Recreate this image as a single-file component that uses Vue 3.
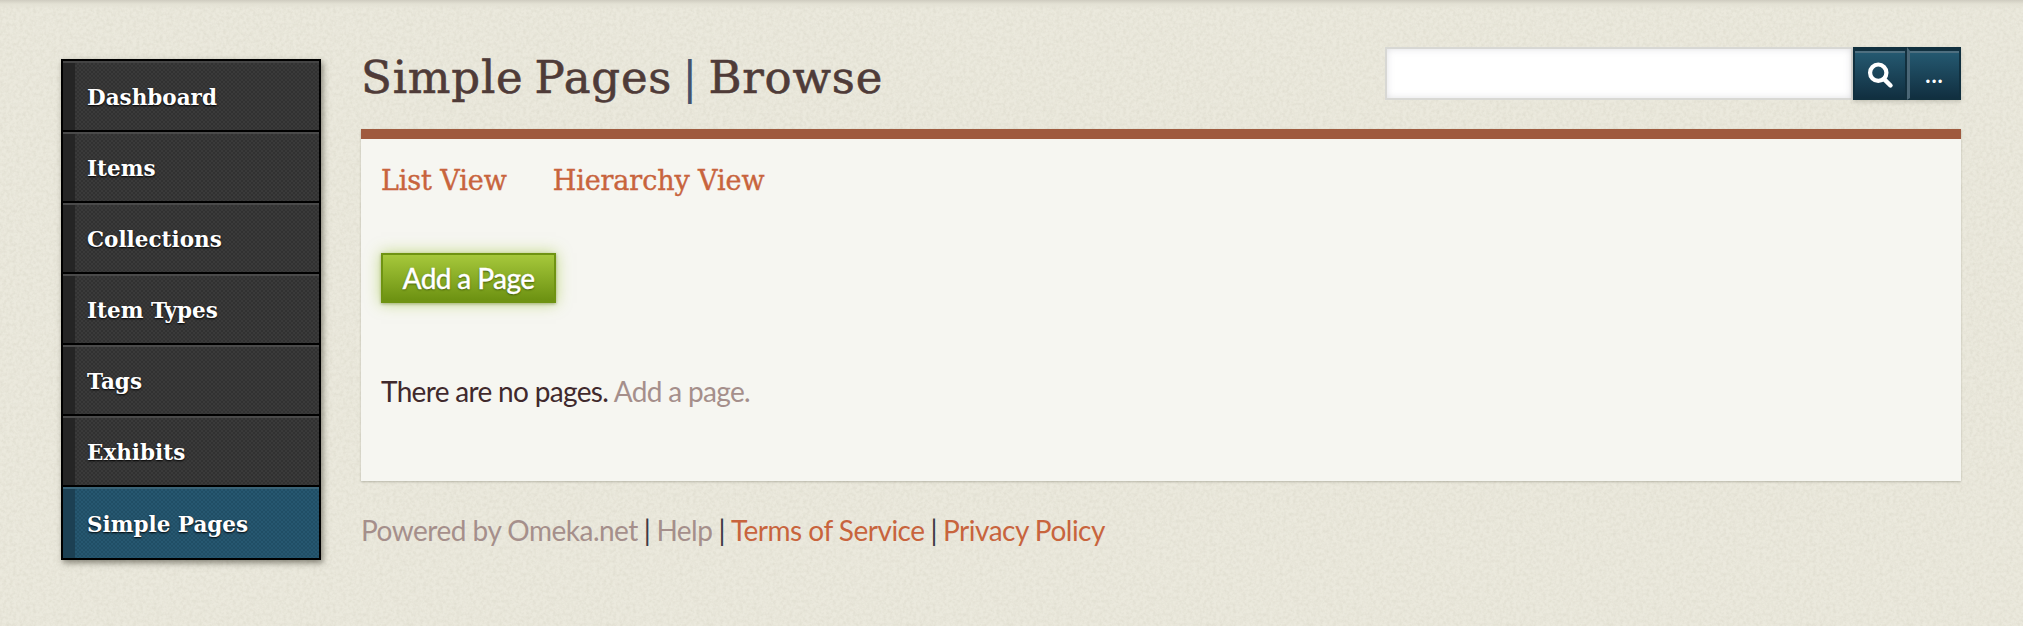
<script setup>
const navItems = ['Dashboard', 'Items', 'Collections', 'Item Types', 'Tags', 'Exhibits', 'Simple Pages']
</script>

<template>
  <div class="page">
    <nav class="side-nav">
      <a
        v-for="item in navItems"
        :key="item"
        class="nav-item"
        :class="{ active: item === 'Simple Pages' }"
      >{{ item }}</a>
    </nav>

    <div class="main">
      <header class="top">
        <h1>Simple Pages <span class="pipe">|</span> Browse</h1>
        <div class="search">
          <input type="text" aria-label="Search" />
          <button class="search-btn" aria-label="Search">
            <svg width="28" height="28" viewBox="0 0 24 24">
              <circle cx="10.5" cy="10" r="7" fill="none" stroke="#fff" stroke-width="3.6" />
              <path d="M15.5 15.5 L21 21" stroke="#fff" stroke-width="3.8" stroke-linecap="round" />
            </svg>
          </button>
          <button class="more-btn">...</button>
        </div>
      </header>

      <section class="panel">
        <div class="tabs">
          <a>List View</a>
          <a>Hierarchy View</a>
        </div>
        <a class="add-btn">Add a Page</a>
        <p class="empty">There are no pages. <a>Add a page.</a></p>
      </section>

      <footer class="foot">
        <a class="muted">Powered by Omeka.net</a>
        <span class="sep">|</span>
        <a class="muted">Help</a>
        <span class="sep">|</span>
        <a class="link">Terms of Service</a>
        <span class="sep">|</span>
        <a class="link">Privacy Policy</a>
      </footer>
    </div>
  </div>
</template>

<style>
html,
body {
  margin: 0;
  height: 100%;
  background-color: #ebe9dd;
  overflow: hidden;
}
</style>

<style scoped>
.page {
  display: flex;
  gap: 40px;
  height: 626px;
  box-sizing: border-box;
  padding: 59px 62px 0 61px;
  background-color: #ebe9dd;
  background-image:
    linear-gradient(to bottom, #cfccc0 0, #e3e1d4 4px, transparent 9px),
    url("data:image/svg+xml,%3Csvg xmlns='http://www.w3.org/2000/svg' width='300' height='300'%3E%3Cfilter id='n'%3E%3CfeTurbulence type='fractalNoise' baseFrequency='.3' numOctaves='3' stitchTiles='stitch'/%3E%3CfeColorMatrix values='0 0 0 0 .5 0 0 0 0 .48 0 0 0 0 .38 0 0 0 .4 -.14'/%3E%3C/filter%3E%3Crect width='300' height='300' filter='url(%23n)'/%3E%3C/svg%3E");
  font-family: Lato, "Open Sans", sans-serif;
}

.side-nav {
  display: grid;
  grid-template-rows: repeat(7, 1fr);
  flex: 0 0 260px;
  height: 501px;
  box-sizing: border-box;
  border: 2px solid #000;
  background: #000;
  box-shadow: 2px 3px 6px rgba(40, 38, 25, 0.5);
}

.nav-item {
  display: flex;
  align-items: center;
  box-sizing: border-box;
  padding: 1px 0 0 24px;
  color: #fff;
  font-family: "DejaVu Serif", serif;
  font-size: 21.5px;
  font-weight: 700;
  letter-spacing: 0;
  text-shadow: 0 1px 2px #000;
  background-color: #363636;
  background-image:
    linear-gradient(to right, #252525 0, #252525 12px, transparent 12px),
    repeating-conic-gradient(#3a3a3a 0 25%, #313131 0 50%);
  background-size: auto, 4px 4px;
  border-top: 2px solid #4a4a4a;
  border-bottom: 2px solid #000;
}

.nav-item:first-child {
  border-top-color: #444;
}

.nav-item:last-child {
  border-bottom: 0;
}

.nav-item.active {
  background-color: #23536b;
  background-image:
    linear-gradient(to right, #1c4053 0, #1c4053 12px, transparent 12px),
    repeating-conic-gradient(#265770 0 25%, #204e65 0 50%);
  border-top-color: #3a6478;
}

.main {
  flex: 1;
  min-width: 0;
}

.top {
  display: flex;
  align-items: flex-start;
  justify-content: space-between;
  height: 70px;
}

h1 {
  margin: 1px 0 0;
  color: #4f3b38;
  font-family: "DejaVu Serif", serif;
  font-size: 45px;
  font-weight: 400;
  line-height: 36px;
  letter-spacing: 0.8px;
  word-spacing: -4px;
  -webkit-text-stroke: 0.6px #4f3b38;
}

.pipe {
  margin: 0 -1px;
  color: #45536b;
  -webkit-text-stroke: 0;
}

.search {
  display: flex;
  height: 53px;
  margin-top: -12px;
}

.search input {
  width: 468px;
  height: 53px;
  box-sizing: border-box;
  border: 2px solid #d8d8d4;
  background: #fff;
  box-shadow: inset 0 0 7px rgba(150, 150, 160, 0.3);
  outline: none;
}

.search button {
  display: flex;
  align-items: center;
  justify-content: center;
  height: 53px;
  box-sizing: border-box;
  padding: 0;
  color: #fff;
  border: 2px solid #11303f;
  border-top-width: 4px;
  background: linear-gradient(to bottom, #255a72, #112f40);
  box-shadow: inset 0 2px 0 #4e6f80, 0 2px 4px rgba(60, 60, 50, 0.2);
}

.search-btn {
  width: 54px;
}

.more-btn {
  width: 54px;
  font-family: Lato, sans-serif;
  font-size: 22px;
  font-weight: 700;
  letter-spacing: 1px;
  border-left: 3px solid #4a6676 !important;
}

.panel {
  height: 352px;
  box-sizing: border-box;
  padding: 27px 20px 0;
  border-top: 10px solid #9f5a3e;
  background-color: #f6f6f1;
  box-shadow: 0 1px 2px rgba(90, 88, 75, 0.35);
}

.tabs {
  display: flex;
  gap: 46px;
  color: #c8643d;
  font-family: "DejaVu Serif", serif;
  font-size: 27px;
  line-height: 30px;
  letter-spacing: -0.1px;
  -webkit-text-stroke: 0.4px #c8643d;
}

.add-btn {
  display: flex;
  align-items: center;
  justify-content: center;
  width: 175px;
  height: 50px;
  box-sizing: border-box;
  margin-top: 57px;
  color: #fff;
  font-size: 28px;
  font-weight: 500;
  letter-spacing: -0.6px;
  -webkit-text-stroke: 0.3px #fff;
  text-shadow: 0 1px 2px #3c5604;
  border: 2px solid #6f9312;
  border-bottom-width: 3px;
  background: linear-gradient(to bottom, #a6c83b, #6d9212);
  box-shadow: 0 0 14px rgba(149, 191, 36, 0.55), 0 1px 3px rgba(50, 60, 10, 0.4);
}

.empty {
  margin: 72px 0 0;
  color: #40292c;
  font-size: 28px;
  line-height: 32px;
  letter-spacing: -0.67px;
}

.empty a {
  color: #a58f8b;
}

.foot {
  display: flex;
  gap: 6px;
  margin-top: 33px;
  font-size: 28px;
  line-height: 32px;
  letter-spacing: -0.5px;
}

.muted {
  color: #a58f8b;
}

.sep {
  color: #3f3a45;
}

.link {
  color: #c8643d;
}
</style>
